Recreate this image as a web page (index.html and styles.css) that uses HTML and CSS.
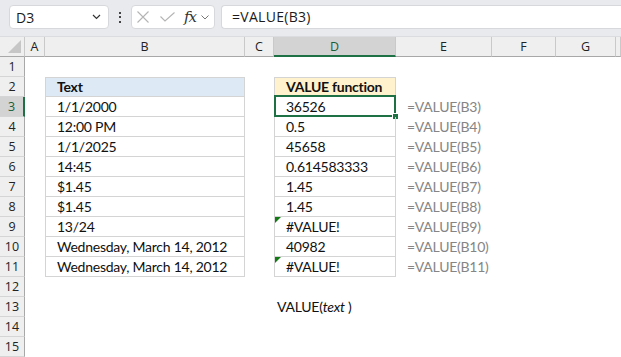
FILE: index.html
```html
<!DOCTYPE html>
<html>
<head>
<meta charset="utf-8">
<link rel="stylesheet" href="styles.css">
</head>
<body>
<div class="bar">
  <div class="namebox">
    <span class="nb-text">D3</span>
    <svg class="chev" width="9" height="6" viewBox="0 0 9 6"><path d="M1 1 L4.5 4.5 L8 1" fill="none" stroke="#333" stroke-width="1.2"/></svg>
  </div>
  <div class="dots"><i></i><i></i><i></i></div>
  <div class="fxbox">
    <svg class="ic-x" width="12" height="12" viewBox="0 0 12 12"><path d="M0.5 0.5 L11.5 11.5 M11.5 0.5 L0.5 11.5" stroke="#b4b4b4" stroke-width="1.1" fill="none"/></svg>
    <svg class="ic-ok" width="15" height="10" viewBox="0 0 15 10"><path d="M0.5 4.5 L5 9 L14.5 0.5" stroke="#b4b4b4" stroke-width="1.1" fill="none"/></svg>
    <span class="fx">fx</span>
    <svg class="chev2" width="8" height="5" viewBox="0 0 8 5"><path d="M0.5 0.5 L4 4 L7.5 0.5" fill="none" stroke="#777" stroke-width="1"/></svg>
  </div>
  <div class="formula">=VALUE(B3)</div>
</div>

<div class="sheet">
  <div class="row hdr">
    <div class="corner"><span class="tri"></span></div>
    <div class="ch">A</div><div class="ch">B</div><div class="ch">C</div><div class="ch act">D</div><div class="ch">E</div><div class="ch">F</div><div class="ch">G</div><div class="ch"></div>
  </div>
  <div class="row"><div class="rh">1</div><div></div><div></div><div></div><div></div><div></div><div></div><div></div><div></div></div>
  <div class="row"><div class="rh">2</div><div></div><div class="t top th blue">Text</div><div></div><div class="t top th yellow">VALUE function</div><div></div><div></div><div></div><div></div></div>
  <div class="row"><div class="rh act">3</div><div></div><div class="t">1/1/2000</div><div></div><div class="t selcell">36526<span class="sel"><span class="handle"></span></span></div><div class="f">=VALUE(B3)</div><div></div><div></div><div></div></div>
  <div class="row"><div class="rh">4</div><div></div><div class="t">12:00 PM</div><div></div><div class="t">0.5</div><div class="f">=VALUE(B4)</div><div></div><div></div><div></div></div>
  <div class="row"><div class="rh">5</div><div></div><div class="t">1/1/2025</div><div></div><div class="t">45658</div><div class="f">=VALUE(B5)</div><div></div><div></div><div></div></div>
  <div class="row"><div class="rh">6</div><div></div><div class="t">14:45</div><div></div><div class="t">0.614583333</div><div class="f">=VALUE(B6)</div><div></div><div></div><div></div></div>
  <div class="row"><div class="rh">7</div><div></div><div class="t">$1.45</div><div></div><div class="t">1.45</div><div class="f">=VALUE(B7)</div><div></div><div></div><div></div></div>
  <div class="row"><div class="rh">8</div><div></div><div class="t">$1.45</div><div></div><div class="t">1.45</div><div class="f">=VALUE(B8)</div><div></div><div></div><div></div></div>
  <div class="row"><div class="rh">9</div><div></div><div class="t">13/24</div><div></div><div class="t err">#VALUE!<span class="gtri"></span></div><div class="f">=VALUE(B9)</div><div></div><div></div><div></div></div>
  <div class="row"><div class="rh">10</div><div></div><div class="t">Wednesday, March 14, 2012</div><div></div><div class="t">40982</div><div class="f">=VALUE(B10)</div><div></div><div></div><div></div></div>
  <div class="row"><div class="rh">11</div><div></div><div class="t">Wednesday, March 14, 2012</div><div></div><div class="t err">#VALUE!<span class="gtri"></span></div><div class="f">=VALUE(B11)</div><div></div><div></div><div></div></div>
  <div class="row"><div class="rh">12</div><div></div><div></div><div></div><div></div><div></div><div></div><div></div><div></div></div>
  <div class="row"><div class="rh">13</div><div></div><div></div><div></div><div class="syn">VALUE(<em>text</em> )</div><div></div><div></div><div></div><div></div></div>
  <div class="row"><div class="rh">14</div><div></div><div></div><div></div><div></div><div></div><div></div><div></div><div></div></div>
  <div class="row"><div class="rh">15</div><div></div><div></div><div></div><div></div><div></div><div></div><div></div><div></div></div>
</div>
</body>
</html>
```

FILE: styles.css
```css
html, body {
  margin: 0;
  padding: 0;
}
body {
  width: 621px;
  height: 357px;
  overflow: hidden;
  background: #fff;
  font-family: "Lato", "Liberation Sans", sans-serif;
  color: #000;
}

/* formula bar */
.bar {
  height: 37px;
  box-sizing: border-box;
  background: #e8eaed;
  display: flex;
  align-items: flex-start;
  padding-top: 5px;
  border-bottom: 1px solid #dadcdf;
  font-family: "Open Sans", "Noto Sans", sans-serif;
  white-space: nowrap;
}
.namebox {
  margin-left: 9px;
  width: 100px;
  height: 24px;
  box-sizing: border-box;
  background: #fff;
  border: 1px solid #d6d8db;
  border-radius: 4px;
  display: flex;
  align-items: center;
  justify-content: space-between;
  padding: 0 7px 0 6px;
}
.nb-text {
  font-size: 14px;
  color: #1b1b1b;
}
.dots {
  width: 22px;
  height: 24px;
  display: flex;
  flex-direction: column;
  align-items: center;
  justify-content: center;
  gap: 2.5px;
}
.dots i {
  display: block;
  width: 2px;
  height: 2px;
  background: #444;
}
.fxbox {
  width: 84px;
  height: 24px;
  box-sizing: border-box;
  background: #fff;
  border: 1px solid #d6d8db;
  border-radius: 4px;
  display: flex;
  align-items: center;
  padding-left: 5px;
}
.ic-x { margin-left: 0; }
.ic-ok { margin-left: 11px; }
.fx {
  font-family: "DejaVu Serif", "Liberation Serif", serif;
  font-style: italic;
  font-size: 15px;
  color: #333;
  margin-left: 9px;
  letter-spacing: -1px;
}
.chev2 { margin-left: 5px; }
.formula {
  margin-left: 6px;
  flex: 1;
  height: 24px;
  box-sizing: border-box;
  background: #fff;
  border: 1px solid #d6d8db;
  border-right: none;
  border-radius: 4px 0 0 4px;
  font-size: 14px;
  line-height: 22px;
  padding-left: 10px;
  color: #1b1b1b;
  letter-spacing: 0.3px;
}

/* sheet grid */
.row {
  display: grid;
  grid-template-columns: 25px 20px 200px 29px 122px 96px 64px 60px 5px;
  height: 20px;
}
.row > div {
  box-sizing: border-box;
  height: 20px;
  line-height: 20px;
  font-size: 14px;
  letter-spacing: -0.25px;
  white-space: nowrap;
  overflow: visible;
  position: relative;
}

.hdr > div {
  background: #efefef;
  border-right: 1px solid #c9c9c9;
  border-bottom: 1px solid #a8a8a8;
  text-align: center;
  font-family: "Open Sans", "Noto Sans", sans-serif;
  font-size: 12.5px;
  letter-spacing: 0;
  line-height: 20px;
  color: #222;
}
.hdr > .corner {
  border-right: 1px solid #c9c9c9;
}
.tri {
  position: absolute;
  right: 3px;
  bottom: 3px;
  width: 0;
  height: 0;
  border-left: 13px solid transparent;
  border-bottom: 13px solid #c6c6c6;
}
.hdr > .ch.act {
  background: #d3d3d3;
  border-bottom: 2px solid #1e7145;
  color: #1b5e36;
}

.row > .rh {
  background: #efefef;
  border-right: 1px solid #a8a8a8;
  border-bottom: 1px solid #d5d5d5;
  text-align: center;
  font-family: "Open Sans", "Noto Sans", sans-serif;
  font-size: 12.5px;
  letter-spacing: 0;
  line-height: 20px;
  color: #222;
}
.row > .rh.act {
  background: #d3d3d3;
  border-right: 2px solid #1e7145;
  color: #1b5e36;
}

/* table cells */
.row > .t {
  border-left: 1px solid #d4d4d4;
  border-right: 1px solid #d4d4d4;
  border-bottom: 1px solid #d4d4d4;
  padding-left: 11px;
  color: #111;
  line-height: 19px;
}
.row > .t.top {
  border-top: 1px solid #d4d4d4;
  line-height: 18px;
}
.th { font-weight: bold; }
.blue { background: #dde9f5; }
.yellow { background: #fff2cc; }

.f {
  padding-left: 11px;
  color: #858585;
}
.syn {
  padding-left: 3px;
  color: #111;
}
.syn em { font-style: italic; }

.sel {
  position: absolute;
  left: -1px;
  top: -2px;
  right: -1px;
  bottom: -1px;
  border: 2px solid #1e7145;
}
.handle {
  position: absolute;
  right: -4px;
  bottom: -4px;
  width: 5px;
  height: 5px;
  background: #1e7145;
  border-left: 1px solid #fff;
  border-top: 1px solid #fff;
}
.gtri {
  position: absolute;
  left: 0;
  top: 0;
  width: 0;
  height: 0;
  border-top: 6px solid #127a12;
  border-right: 6px solid transparent;
}
```
